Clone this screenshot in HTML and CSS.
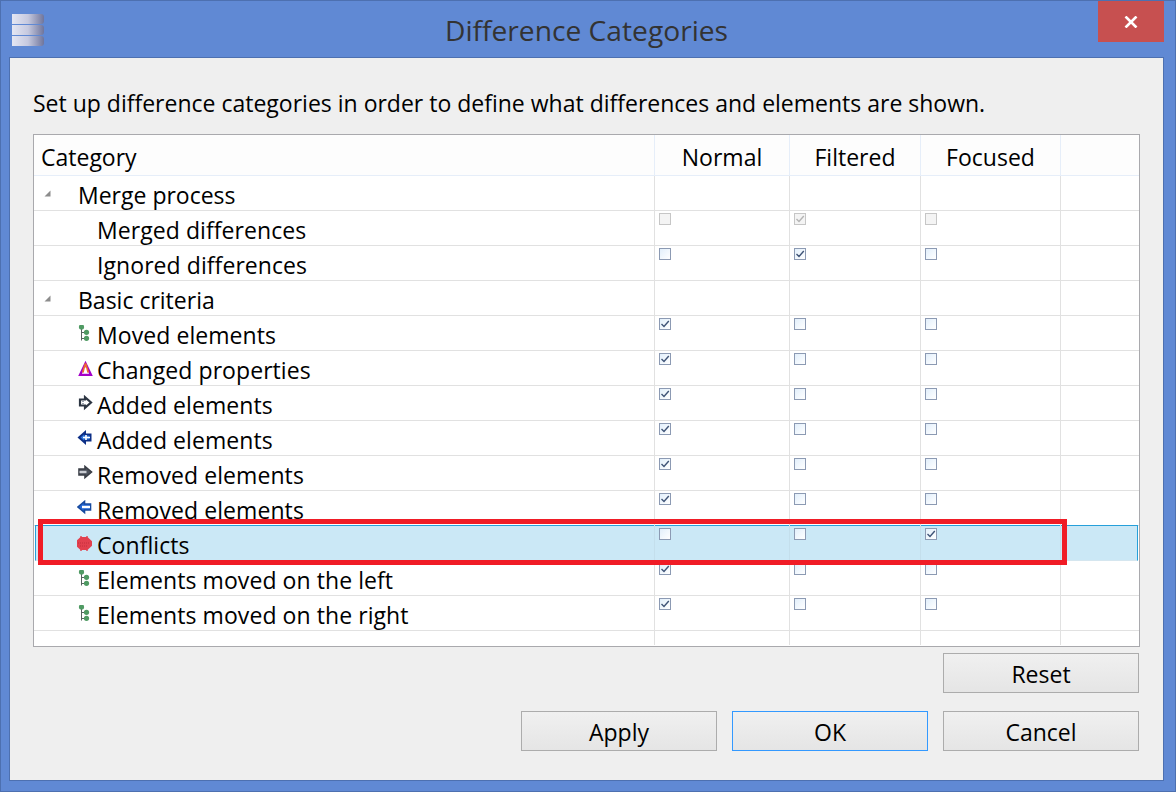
FILE: index.html
```html
<!DOCTYPE html>
<html lang="en">
<head>
	<meta charset="UTF-8">
	<title>Difference Categories</title>
	<link rel="stylesheet" href="styles.css">
</head>
<body>
	<svg class="defs" width="0" height="0">
		<symbol id="check" viewBox="0 0 10 10"><path d="M1.5 5 L4 7.5 L8.8 2" fill="none" stroke="currentColor" stroke-width="1.4"/></symbol>
		<symbol id="twisty" viewBox="0 0 7 7"><path d="M6.5 0.5 V6.5 H0.5 Z" fill="#8c8c8c"/></symbol>
		<symbol id="moved" viewBox="0 0 16 16">
			<path d="M4.5 2 V15.5 M4.5 7.5 H9 M4.5 13.5 H9" fill="none" stroke="#56635f" stroke-width="1"/>
			<circle cx="4.5" cy="2" r="2.6" fill="#4f9a63"/>
			<circle cx="9.5" cy="7.3" r="2.6" fill="#4f9a63"/>
			<circle cx="9.5" cy="13.3" r="2.6" fill="#4f9a63"/>
		</symbol>
		<symbol id="changed" viewBox="0 0 16 16">
			<path d="M8.5 3.5 L14 15 H3 Z" fill="#fff" stroke="#a400c8" stroke-width="2.4"/>
			<path d="M8.5 3.5 L5.8 12.5 M8.5 3.5 L11.2 12.5" fill="none" stroke="#ee6a30" stroke-width="1.8"/>
			<path d="M8.5 8 V12" stroke="#fff" stroke-width="1.5"/>
		</symbol>
		<symbol id="addright" viewBox="0 0 16 16">
			<path d="M3 4.5 H8 V2.2 L14 7.5 L8 12.8 V10.5 H3 Z" fill="#fff" stroke="#2c3542" stroke-width="2.2"/>
			<path d="M5 6.5 H7 M5 8.5 H7" stroke="#9aa3b0" stroke-width="1"/>
		</symbol>
		<symbol id="addleft" viewBox="0 0 16 16">
			<path d="M13.5 4.5 H8 V2.2 L2 7.5 L8 12.8 V10.5 H13.5 Z" fill="#2f78e0" stroke="#0d2f86" stroke-width="2"/>
			<path d="M6 7.5 H13 M9 5 V10" stroke="#fff" stroke-width="1.6"/>
		</symbol>
		<symbol id="remright" viewBox="0 0 16 16">
			<path d="M2 4 H8 V1.5 L14.5 7 L8 12.5 V10 H2 Z" fill="#4d525c" stroke="#3a3e46" stroke-width="1.6"/>
			<path d="M2.5 7 H9.5" stroke="#c9ccd2" stroke-width="2.4"/>
		</symbol>
		<symbol id="remleft" viewBox="0 0 16 16">
			<path d="M13.5 4 H7.5 V1.5 L1 7 L7.5 12.5 V10 H13.5 Z" fill="#2468d8" stroke="#174a9e" stroke-width="1.6"/>
			<path d="M5 7 H13" stroke="#fff" stroke-width="2.4"/>
		</symbol>
		<symbol id="conflict" viewBox="0 0 16 16">
			<path d="M3.5 2 H10.5 L15 6.2 V10.8 L10.5 15 H3.5 L-1 10.8 V6.2 Z" fill="#e2404e"/>
			<path d="M4 1 V2.5 M10 1 V2.5 M4 14.5 V16 M10 14.5 V16" stroke="#e2404e" stroke-width="1.4"/>
			<path d="M1 8 H13 M3 11 H11" stroke="#c22f3c" stroke-width="1" stroke-dasharray="1 1"/>
		</symbol>
	</svg>

	<div class="window">
		<div class="titlebar">
			<div class="appicon"><i></i><i></i><i></i></div>
			<div class="title">Difference Categories</div>
			<div class="close"><svg width="14" height="12" viewBox="0 0 14 12"><path d="M1.5 0.5 L12.5 11.5 M12.5 0.5 L1.5 11.5" stroke="#fff" stroke-width="2.6"/></svg></div>
		</div>
		<div class="client">
			<p class="intro">Set up difference categories in order to define what differences and elements are shown.</p>

			<div class="table">
				<div class="row head">
					<div class="cell name">Category</div>
					<div class="cell mid">Normal</div>
					<div class="cell mid">Filtered</div>
					<div class="cell mid">Focused</div>
					<div class="cell"></div>
				</div>

				<div class="row">
					<div class="cell name group"><svg class="twisty"><use href="#twisty"/></svg>Merge process</div>
					<div class="cell"></div><div class="cell"></div><div class="cell"></div><div class="cell"></div>
				</div>
				<div class="row">
					<div class="cell name child">Merged differences</div>
					<div class="cell"><span class="cb off"></span></div>
					<div class="cell"><span class="cb off"><svg><use href="#check"/></svg></span></div>
					<div class="cell"><span class="cb off"></span></div>
					<div class="cell"></div>
				</div>
				<div class="row">
					<div class="cell name child">Ignored differences</div>
					<div class="cell"><span class="cb"></span></div>
					<div class="cell"><span class="cb"><svg><use href="#check"/></svg></span></div>
					<div class="cell"><span class="cb"></span></div>
					<div class="cell"></div>
				</div>
				<div class="row">
					<div class="cell name group"><svg class="twisty"><use href="#twisty"/></svg>Basic criteria</div>
					<div class="cell"></div><div class="cell"></div><div class="cell"></div><div class="cell"></div>
				</div>
				<div class="row">
					<div class="cell name child"><svg class="ico"><use href="#moved"/></svg>Moved elements</div>
					<div class="cell"><span class="cb"><svg><use href="#check"/></svg></span></div>
					<div class="cell"><span class="cb"></span></div>
					<div class="cell"><span class="cb"></span></div>
					<div class="cell"></div>
				</div>
				<div class="row">
					<div class="cell name child"><svg class="ico"><use href="#changed"/></svg>Changed properties</div>
					<div class="cell"><span class="cb"><svg><use href="#check"/></svg></span></div>
					<div class="cell"><span class="cb"></span></div>
					<div class="cell"><span class="cb"></span></div>
					<div class="cell"></div>
				</div>
				<div class="row">
					<div class="cell name child"><svg class="ico"><use href="#addright"/></svg>Added elements</div>
					<div class="cell"><span class="cb"><svg><use href="#check"/></svg></span></div>
					<div class="cell"><span class="cb"></span></div>
					<div class="cell"><span class="cb"></span></div>
					<div class="cell"></div>
				</div>
				<div class="row">
					<div class="cell name child"><svg class="ico"><use href="#addleft"/></svg>Added elements</div>
					<div class="cell"><span class="cb"><svg><use href="#check"/></svg></span></div>
					<div class="cell"><span class="cb"></span></div>
					<div class="cell"><span class="cb"></span></div>
					<div class="cell"></div>
				</div>
				<div class="row">
					<div class="cell name child"><svg class="ico"><use href="#remright"/></svg>Removed elements</div>
					<div class="cell"><span class="cb"><svg><use href="#check"/></svg></span></div>
					<div class="cell"><span class="cb"></span></div>
					<div class="cell"><span class="cb"></span></div>
					<div class="cell"></div>
				</div>
				<div class="row">
					<div class="cell name child"><svg class="ico"><use href="#remleft"/></svg>Removed elements</div>
					<div class="cell"><span class="cb"><svg><use href="#check"/></svg></span></div>
					<div class="cell"><span class="cb"></span></div>
					<div class="cell"><span class="cb"></span></div>
					<div class="cell"></div>
				</div>
				<div class="row selected">
					<div class="cell name child"><svg class="ico"><use href="#conflict"/></svg>Conflicts</div>
					<div class="cell"><span class="cb"></span></div>
					<div class="cell"><span class="cb"></span></div>
					<div class="cell"><span class="cb"><svg><use href="#check"/></svg></span></div>
					<div class="cell"></div>
				</div>
				<div class="row">
					<div class="cell name child"><svg class="ico"><use href="#moved"/></svg>Elements moved on the left</div>
					<div class="cell"><span class="cb"><svg><use href="#check"/></svg></span></div>
					<div class="cell"><span class="cb"></span></div>
					<div class="cell"><span class="cb"></span></div>
					<div class="cell"></div>
				</div>
				<div class="row">
					<div class="cell name child"><svg class="ico"><use href="#moved"/></svg>Elements moved on the right</div>
					<div class="cell"><span class="cb"><svg><use href="#check"/></svg></span></div>
					<div class="cell"><span class="cb"></span></div>
					<div class="cell"><span class="cb"></span></div>
					<div class="cell"></div>
				</div>
				<div class="row filler">
					<div class="cell"></div><div class="cell"></div><div class="cell"></div><div class="cell"></div><div class="cell"></div>
				</div>
			</div>

			<div class="btnrow first">
				<button class="btn">Reset</button>
			</div>
			<div class="btnrow">
				<button class="btn">Apply</button>
				<button class="btn default">OK</button>
				<button class="btn">Cancel</button>
			</div>

			<div class="callout"></div>
		</div>
	</div>
</body>
</html>
```

FILE: styles.css
```css
*{
	padding:0;
	margin:0;
	box-sizing:border-box;
}
body{
	font-family:"Open Sans","Noto Sans",sans-serif;
	font-size:23px;
	color:#000;
	background:#6089d4;
}
.defs{
	position:absolute;
}
.window{
	width:1176px;
	height:792px;
	background:#6089d4;
	border:1px solid #4d70b0;
	display:flex;
	flex-direction:column;
}

/* title bar */
.titlebar{
	height:56px;
	display:grid;
	grid-template-columns:1fr auto 1fr;
	align-items:start;
}
.appicon{
	width:32px;
	margin:13px 0 0 11px;
	display:flex;
	flex-direction:column;
	gap:1px;
}
.appicon i{
	display:block;
	height:10px;
	border-radius:0 3px 3px 0;
	background:linear-gradient(to right,#e4e6f3,#c6c9df 50%,#6f759c);
}
.title{
	font-size:28.2px;
	line-height:58px;
	color:#333;
	margin-right:3px;
}
.close{
	justify-self:end;
	width:66px;
	height:41px;
	margin-right:11px;
	background:#c75050;
	display:flex;
	align-items:center;
	justify-content:center;
}

/* client area */
.client{
	position:relative;
	width:1155px;
	height:724px;
	margin-left:8px;
	background:#efefef;
	border:1px solid #4d70b0;
	padding:0 24px 0 23px;
}
.intro{
	line-height:30px;
	margin-top:30px;
	margin-bottom:16px;
	white-space:nowrap;
}

/* table */
.table{
	width:1107px;
	height:513px;
	background:#fff;
	border:1px solid #a9a9ad;
}
.row{
	display:grid;
	grid-template-columns:621px 135px 131px 140px 78px;
	height:35px;
	border-bottom:1px solid #e1e1e1;
}
.cell{
	border-right:1px solid #e1e1e1;
	padding:2px 0 0 4px;
	min-width:0;
}
.cell:last-child{
	border-right:none;
}
.name{
	display:flex;
	align-items:flex-start;
	padding:0;
	line-height:39px;
	white-space:nowrap;
}
.head{
	height:41px;
	background:#fdfdfd;
	border-bottom-color:#e6eef9;
}
.head .cell{
	border-right-color:#e6eef9;
	padding:0;
	line-height:45px;
}
.head .name{
	padding-left:7px;
}
.head .mid{
	text-align:center;
}
.group{
	padding-left:10px;
}
.child{
	padding-left:63px;
	letter-spacing:.07px;
}
.twisty{
	width:7px;
	height:7px;
	margin:14px 27px 0 0;
}
.ico{
	width:16px;
	height:16px;
	margin:9px 4px 0 -20px;
	flex:none;
	overflow:visible;
}
.selected{
	margin:-1px 1px 0 1px;
	height:36px;
	grid-template-columns:619px 135px 131px 140px 76px;
	background:#cbe8f6;
	border-top:1px solid #26a0da;
	border-left:1px solid #26a0da;
	border-right:1px solid #26a0da;
	border-bottom:1px solid #d5e6ef;
}
.selected .cell{
	border-right-color:#c4dfec;
}
.selected .cell:last-child{
	border-right:none;
}
.selected .child{
	padding-left:61px;
}
.filler{
	height:14px;
	border-bottom:none;
}

/* checkboxes */
.cb{
	display:block;
	width:12px;
	height:12px;
	border:1px solid #8c9ab3;
	background:linear-gradient(135deg,#e2effb,#fff);
	color:#3f5477;
}
.cb svg{
	display:block;
	width:10px;
	height:10px;
}
.cb.off{
	border-color:#c6c6c6;
	background:#f4f4f4;
	color:#b4b4b4;
}

/* buttons */
.btnrow{
	display:flex;
	justify-content:flex-end;
	gap:15px;
	margin-top:18px;
}
.btnrow.first{
	margin-top:6px;
}
.btn{
	width:196px;
	height:40px;
	border:1px solid #acacac;
	background:linear-gradient(#f0f0f0,#e5e5e5);
	font-family:inherit;
	font-size:23px;
	line-height:36px;
	padding-top:2px;
	color:#000;
}
.btn.default{
	border-color:#3399ff;
}

/* red annotation drawn on top of the screenshot */
.callout{
	position:absolute;
	left:28px;
	top:461px;
	width:1029px;
	height:46px;
	border:5px solid #f01c26;
}
```
